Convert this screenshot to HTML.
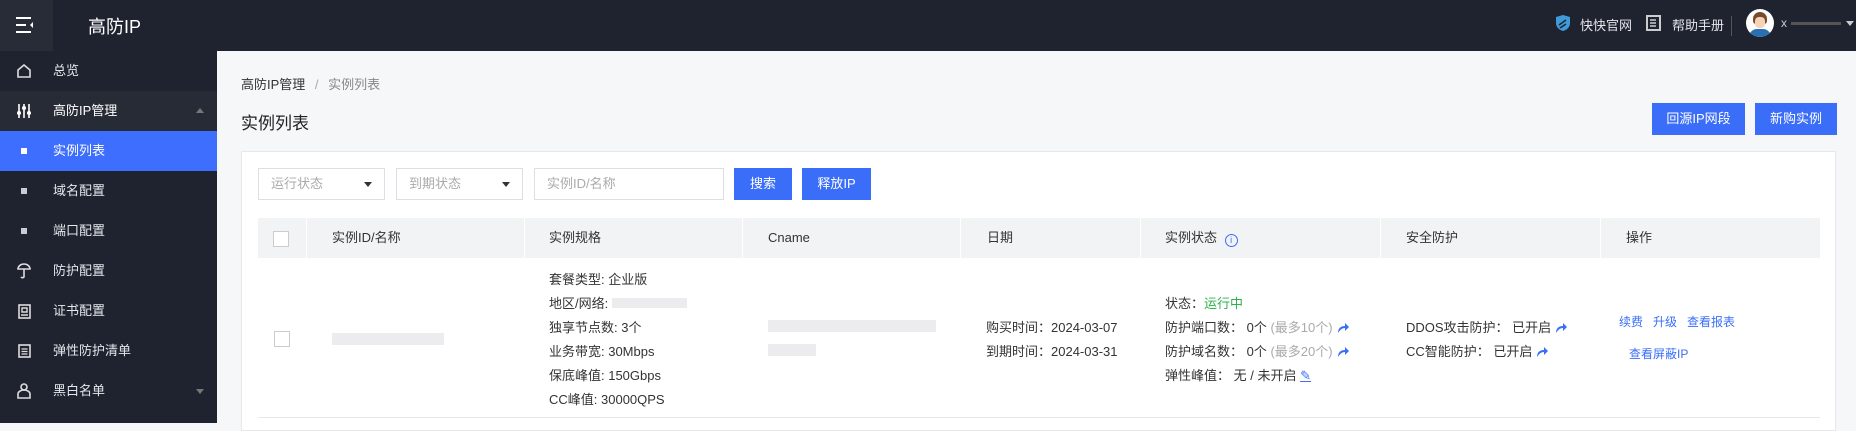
<!DOCTYPE html>
<html><head><meta charset="utf-8"><style>
*{margin:0;padding:0;box-sizing:border-box}
body{width:1856px;height:423px;overflow:hidden;background:#f6f7f9;font-family:"Liberation Sans","Noto Sans CJK SC",sans-serif;font-size:13px;color:#333;position:relative}
.a{position:absolute;white-space:nowrap}
.hdr{left:0;top:0;width:1856px;height:51px;background:#1f2330}
.side{left:0;top:51px;width:217px;height:372px;background:#1f2330}
.it{position:absolute;left:0;width:217px;height:40px;line-height:40px;color:#e4e6ea;font-size:13px}
.it span{position:absolute;left:53px}
.it i{position:absolute;left:21px;top:17px;width:6px;height:6px;background:#c9ccd3}
.btn{position:absolute;background:#3b6ef8;color:#fff;text-align:center;font-size:13px}
.sel{position:absolute;top:168px;height:32px;border:1px solid #dcdfe6;background:#fff;color:#aaa;line-height:30px;padding-left:12px}
.sel b{position:absolute;right:12px;top:13px;border-left:4px solid transparent;border-right:4px solid transparent;border-top:5px solid #333}
.th{position:absolute;top:218px;height:40px;line-height:40px;background:#f2f3f5;color:#333}
.bl{position:absolute;background:#e6e7ea;height:12px}
.lnk{color:#3b6ef8}
.arr{display:inline-block;width:12px;height:10px;vertical-align:-1px;margin-left:4px}
</style></head><body>
<div class="a hdr"></div>
<div class="a" style="left:0;top:0;width:53px;height:51px;background:#282c37"></div>
<svg class="a" style="left:15px;top:16px" width="20" height="18" viewBox="0 0 20 18"><path d="M1 2h15M1 9h10M1 16h15" stroke="#fff" stroke-width="2"/><path d="M18 6l-3 3 3 3z" fill="#fff"/></svg>
<div class="a" style="left:88px;top:13px;font-size:18px;color:#fff">高防IP</div>
<svg class="a" style="left:1555px;top:14px" width="16" height="18" viewBox="0 0 16 18"><path d="M8 1l7 2v6c0 4-3 7-7 8-4-1-7-4-7-8V3z" fill="#3f9bd8"/><path d="M4 11l7-5M5 14l6-4" stroke="#1f2330" stroke-width="1.5"/></svg>
<div class="a" style="left:1580px;top:15px;color:#e4e6ea;font-size:13px">快快官网</div>
<svg class="a" style="left:1646px;top:15px" width="15" height="16" viewBox="0 0 15 16"><rect x="1" y="1" width="13" height="14" fill="none" stroke="#ccc" stroke-width="2"/><path d="M4 5h6M4 8h6M4 11h6" stroke="#ccc" stroke-width="1.5"/></svg>
<div class="a" style="left:1672px;top:15px;color:#e4e6ea;font-size:13px">帮助手册</div>
<div class="a" style="left:1731px;top:16px;width:1px;height:20px;background:#555"></div>
<div class="a" style="left:1746px;top:9px;width:28px;height:28px;border-radius:50%;background:#fff;overflow:hidden"><div class="a" style="left:7px;top:3px;width:14px;height:12px;border-radius:7px 7px 3px 3px;background:#7a4a2a"></div><div class="a" style="left:9px;top:8px;width:10px;height:11px;border-radius:4px;background:#f5d3b8"></div><div class="a" style="left:3px;top:20px;width:22px;height:10px;border-radius:8px 8px 0 0;background:#2a6fb0"></div></div>
<div class="a" style="left:1781px;top:16px;color:#ccc;font-size:12px">x</div>
<div class="a" style="left:1791px;top:22px;width:50px;height:3px;background:#555"></div>
<div class="a" style="left:1846px;top:21px;border-left:4px solid transparent;border-right:4px solid transparent;border-top:5px solid #ccc"></div>

<div class="a side"></div>
<div class="it" style="top:51px"><svg class="a" style="left:17px;top:13px" width="14" height="14" viewBox="0 0 14 14"><path d="M1 6l6-5 6 5v7H1z" fill="none" stroke="#ddd" stroke-width="1.6"/></svg><span>总览</span></div>
<div class="it" style="top:91px;background:#272b36;color:#fff"><svg class="a" style="left:16px;top:12px" width="16" height="16" viewBox="0 0 16 16"><path d="M3 1v14M8 1v14M13 1v14" stroke="#fff" stroke-width="1.6"/><circle cx="3" cy="10" r="2" fill="#fff"/><circle cx="8" cy="5" r="2" fill="#fff"/><circle cx="13" cy="10" r="2" fill="#fff"/></svg><span>高防IP管理</span><div class="a" style="left:196px;top:17px;border-left:4px solid transparent;border-right:4px solid transparent;border-bottom:5px solid #777"></div></div>
<div class="it" style="top:131px;background:#3d6efd;color:#fff"><i style="background:#fff"></i><span>实例列表</span></div>
<div class="it" style="top:171px"><i></i><span>域名配置</span></div>
<div class="it" style="top:211px"><i></i><span>端口配置</span></div>
<div class="it" style="top:251px"><svg class="a" style="left:17px;top:12px" width="14" height="16" viewBox="0 0 14 16"><path d="M1 6a6 5 0 0 1 12 0zM7 6v8a2 2 0 0 1-3 0" fill="none" stroke="#ddd" stroke-width="1.6"/></svg><span>防护配置</span></div>
<div class="it" style="top:291px"><svg class="a" style="left:18px;top:13px" width="13" height="15" viewBox="0 0 13 15"><rect x="1" y="1" width="11" height="13" fill="none" stroke="#ddd" stroke-width="1.6"/><path d="M4 4h5v4H4zM3 11h7" stroke="#ddd" stroke-width="1.4" fill="none"/></svg><span>证书配置</span></div>
<div class="it" style="top:331px"><svg class="a" style="left:18px;top:13px" width="13" height="14" viewBox="0 0 13 14"><rect x="1" y="1" width="11" height="12" fill="none" stroke="#ddd" stroke-width="1.6"/><path d="M3.5 5h6M3.5 7.5h6M3.5 10h6" stroke="#ddd" stroke-width="1.2"/></svg><span>弹性防护清单</span></div>
<div class="it" style="top:371px"><svg class="a" style="left:17px;top:12px" width="14" height="16" viewBox="0 0 14 16"><circle cx="7" cy="4" r="3" fill="none" stroke="#ddd" stroke-width="1.6"/><path d="M1 15v-4a6 4 0 0 1 12 0v4z" fill="none" stroke="#ddd" stroke-width="1.6"/></svg><span>黑白名单</span><div class="a" style="left:196px;top:18px;border-left:4px solid transparent;border-right:4px solid transparent;border-top:5px solid #777"></div></div>

<div class="a" style="left:241px;top:74px;color:#333">高防IP管理 <span style="color:#aaa;margin:0 6px">/</span> <span style="color:#888">实例列表</span></div>
<div class="a" style="left:241px;top:109px;font-size:17px;color:#222">实例列表</div>
<div class="btn" style="left:1652px;top:103px;width:93px;height:32px;line-height:32px">回源IP网段</div>
<div class="btn" style="left:1755px;top:103px;width:82px;height:32px;line-height:32px">新购实例</div>

<div class="a" style="left:241px;top:151px;width:1595px;height:280px;background:#fff;border:1px solid #e6e8eb"></div>
<div class="sel" style="left:258px;width:127px">运行状态<b></b></div>
<div class="sel" style="left:396px;width:127px">到期状态<b></b></div>
<div class="sel" style="left:534px;width:190px">实例ID/名称</div>
<div class="btn" style="left:734px;top:168px;width:58px;height:32px;line-height:32px">搜索</div>
<div class="btn" style="left:802px;top:168px;width:69px;height:32px;line-height:32px">释放IP</div>

<div class="th" style="left:258px;width:48px"><div class="a" style="left:15px;top:13px;width:16px;height:16px;border:1px solid #ccc;background:#fff"></div></div>
<div class="th" style="left:307px;width:217px;padding-left:25px">实例ID/名称</div>
<div class="th" style="left:525px;width:217px;padding-left:24px">实例规格</div>
<div class="th" style="left:743px;width:217px;padding-left:25px">Cname</div>
<div class="th" style="left:961px;width:179px;padding-left:26px">日期</div>
<div class="th" style="left:1141px;width:239px;padding-left:24px">实例状态 <span style="display:inline-block;width:13px;height:13px;border:1.5px solid #3b6ef8;border-radius:50%;color:#3b6ef8;font-size:9px;line-height:10px;text-align:center;vertical-align:-1px;margin-left:4px">i</span></div>
<div class="th" style="left:1381px;width:219px;padding-left:25px">安全防护</div>
<div class="th" style="left:1601px;width:219px;padding-left:25px">操作</div>
<div class="a" style="left:258px;top:417px;width:1562px;height:1px;background:#e6e8eb"></div>

<div class="a" style="left:274px;top:331px;width:16px;height:16px;border:1px solid #ccc"></div>
<div class="bl" style="left:332px;top:333px;width:112px;background:#ececee"></div>
<div class="a" style="left:549px;top:268px;line-height:24px">套餐类型: 企业版<br>地区/网络: <span style="display:inline-block;width:75px;height:10px;background:#ececee"></span><br>独享节点数: 3个<br>业务带宽: 30Mbps<br>保底峰值: 150Gbps<br>CC峰值: 30000QPS</div>
<div class="bl" style="left:768px;top:320px;width:168px;background:#ececee"></div>
<div class="bl" style="left:768px;top:344px;width:48px;background:#ececee"></div>
<div class="a" style="left:986px;top:316px;line-height:24px">购买时间：2024-03-07<br>到期时间：2024-03-31</div>
<div class="a" style="left:1165px;top:292px;line-height:24px">状态：<span style="color:#2bb24c">运行中</span><br>防护端口数：&nbsp;0个 <span style="color:#aaa">(最多10个)</span><svg class="arr" viewBox="0 0 12 10"><path d="M1 10C1 5 4 3 8 3V0l4 4-4 4V5C5 5 3 7 1 10z" fill="#3b6ef8"/></svg><br>防护域名数：&nbsp;0个 <span style="color:#aaa">(最多20个)</span><svg class="arr" viewBox="0 0 12 10"><path d="M1 10C1 5 4 3 8 3V0l4 4-4 4V5C5 5 3 7 1 10z" fill="#3b6ef8"/></svg><br>弹性峰值：&nbsp;无 / 未开启 <span class="lnk" style="text-decoration:underline">✎</span></div>
<div class="a" style="left:1406px;top:316px;line-height:24px">DDOS攻击防护：&nbsp;已开启<svg class="arr" viewBox="0 0 12 10"><path d="M1 10C1 5 4 3 8 3V0l4 4-4 4V5C5 5 3 7 1 10z" fill="#3b6ef8"/></svg><br>CC智能防护：&nbsp;已开启<svg class="arr" viewBox="0 0 12 10"><path d="M1 10C1 5 4 3 8 3V0l4 4-4 4V5C5 5 3 7 1 10z" fill="#3b6ef8"/></svg></div>
<div class="a lnk" style="left:1619px;top:313px;font-size:12px">续费&nbsp;&nbsp;&nbsp;升级&nbsp;&nbsp;&nbsp;查看报表</div>
<div class="a lnk" style="left:1629px;top:345px;font-size:12px">查看屏蔽IP</div>
</body></html>
